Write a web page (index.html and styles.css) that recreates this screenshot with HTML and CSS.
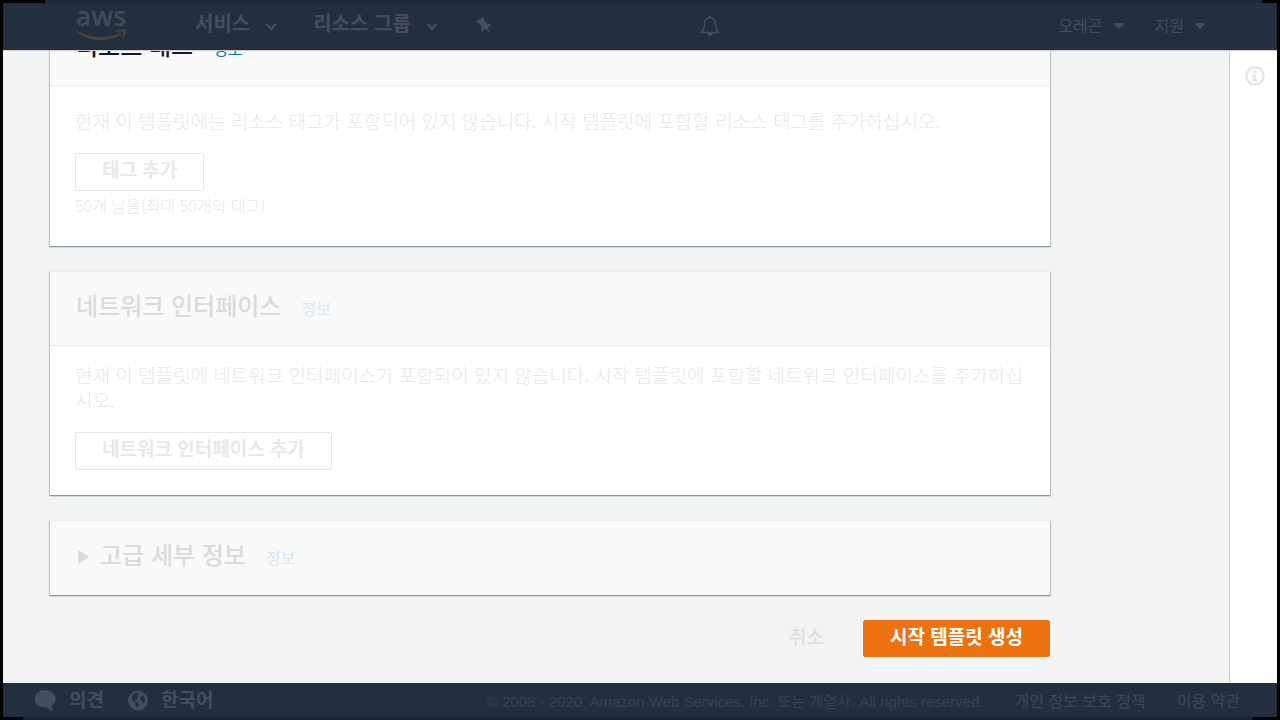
FILE: index.html
```html
<!DOCTYPE html>
<html lang="ko">

<head>
    <meta charset="UTF-8">
    <meta name="viewport" content="width=device-width, initial-scale=1.0">
    <title>시작 템플릿 생성</title>
    <link rel="stylesheet" href="styles.css">
</head>

<body>
    <div class="edge edge-top"></div>

    <div class="app">
        <!-- Top navigation -->
        <header class="navbar">
            <a class="logo" href="#">
                <span class="logo-text">aws</span>
                <svg class="logo-smile" viewBox="0 0 52 12" width="52" height="12">
                    <path d="M1 1.500C15 9.500 31 10 44.500 4.300C46 3.700 47 5 45.500 6C33 13.500 13 13 0.500 2.200C0 1.600 .4 1.200 1 1.500Z"/>
                    <path d="M40.500 1.800C43.500-.2 49-.5 50.600.5C51.800 2 50.300 7.500 47.300 9.900C46.800 10.300 46.500 10 46.700 9.400C47.600 7.200 48.700 4 48 3.100C47.200 2.200 43.500 2.500 41 2.700C40.300 2.700 40 2.200 40.500 1.800Z"/>
                </svg>
            </a>
            <button class="nav-main nav-services">서비스
                <svg width="12" height="7" viewBox="0 0 12 7"><path d="M0 0h3l3 3 3-3h3L6 7z"/></svg>
            </button>
            <button class="nav-main nav-groups">리소스 그룹
                <svg width="12" height="7" viewBox="0 0 12 7"><path d="M0 0h3l3 3 3-3h3L6 7z"/></svg>
            </button>
            <button class="nav-icon" aria-label="pin">
                <svg width="16" height="18" viewBox="0 0 16 18"><path d="M0 4.500L7 0l1.300 1-.5 1.500 3 4.300c1.700-.3 3.200.1 4.200 1.400l-3 2.200L14.500 17l-5.200-5.300L5.500 14.800c-.8-1.700-.6-3.300.4-4.700L2.800 5.800 1 6z"/></svg>
            </button>
            <button class="nav-icon nav-bell" aria-label="bell">
                <svg width="20" height="22" viewBox="0 0 20 22">
                    <path class="line" d="M1 17.500C4 15.500 4.500 12 4.500 9C4.500 5 6.500 2.700 10 2.700S15.500 5 15.500 9C15.500 12 16 15.500 19 17.500Z"/>
                    <path d="M9 .5h2v2H9zM7 18h6c0 4-6 4-6 0z"/>
                </svg>
            </button>
            <button class="nav-sub nav-region">오레곤
                <svg width="10" height="6" viewBox="0 0 10 6"><path d="M1 0h8l1 1-5 5-5-5z"/></svg>
            </button>
            <button class="nav-sub">지원
                <svg width="10" height="6" viewBox="0 0 10 6"><path d="M1 0h8l1 1-5 5-5-5z"/></svg>
            </button>
        </header>

        <div class="page">
            <main class="content">
                <section class="card">
                    <div class="card-header">
                        <h2 class="active">리소스 태그</h2>
                        <a class="info active" href="#">정보</a>
                    </div>
                    <div class="card-body tags">
                        <p>현재 이 템플릿에는 리소스 태그가 포함되어 있지 않습니다. 시작 템플릿에 포함할 리소스 태그를 추가하십시오.</p>
                        <button class="btn">태그 추가</button>
                        <small>50개 남음(최대 50개의 태그)</small>
                    </div>
                </section>

                <section class="card">
                    <div class="card-header">
                        <h2>네트워크 인터페이스</h2>
                        <a class="info" href="#">정보</a>
                    </div>
                    <div class="card-body">
                        <p>현재 이 템플릿에 네트워크 인터페이스가 포함되어 있지 않습니다. 시작 템플릿에 포함할 네트워크 인터페이스를 추가하십<wbr>시오.</p>
                        <button class="btn">네트워크 인터페이스 추가</button>
                    </div>
                </section>

                <section class="card">
                    <div class="card-header collapsed">
                        <svg class="arrow" width="11" height="14" viewBox="0 0 11 14"><path d="M1 .5L10.500 6.300v1L1 13.500Q0 13.500 0 12.500V1.500Q0 .5 1 .5z"/></svg>
                        <h2>고급 세부 정보</h2>
                        <a class="info" href="#">정보</a>
                    </div>
                </section>

                <div class="actions">
                    <button class="btn-link">취소</button>
                    <button class="btn btn-primary">시작 템플릿 생성</button>
                </div>
            </main>

            <aside class="help">
                <button class="help-btn" aria-label="info">
                    <svg width="20" height="20" viewBox="0 0 20 20">
                        <circle cx="10" cy="10" r="8.700"/>
                        <path d="M8.500 4.500h3v3h-3zM7.300 8.500h4.200v5h1.300v2H7.300v-2h1.200v-3H7.300z"/>
                    </svg>
                </button>
            </aside>
        </div>

        <!-- Footer -->
        <footer class="footer">
            <button class="foot-main">
                <svg width="22" height="21" viewBox="0 0 22 21"><path d="M11 0c6 0 10.500 3.800 10.500 8.700 0 3-1.600 5.500-4 7.100.2 1.900 1.200 3.400 2.500 4.700-3.400-.1-5.700-1.200-7.500-3.200C5.500 17.900.5 14 .5 8.700.5 3.800 5 0 11 0z"/></svg>
                <span>의견</span>
            </button>
            <button class="foot-main">
                <svg width="20" height="21" viewBox="0 0 20 21"><path fill-rule="evenodd" d="M10 .5a10 10 0 1 0 0 20 10 10 0 0 0 0-20zM5 4.500L7 3.300l3-.5 1 1-2 1.700 1.500 1.800-2.500 2.200-1.500 1.500 2.500 1.500 2.500 2-1.500 2.500-1 1-1.500-2.500-.5-3-2.500-2.500-1-2.500zM13 3.800l2.500 2 1.500 3.500-.5 3-1.500 1.500-1-2.500-2-1.500.5-2.500 2-1.500z"/></svg>
                <span>한국어</span>
            </button>
            <span class="copyright">© 2008 - 2020, Amazon Web Services, Inc. 또는 계열사. All rights reserved.</span>
            <a href="#">개인 정보 보호 정책</a>
            <a href="#">이용 약관</a>
        </footer>
    </div>

    <div class="edge edge-bottom"></div>
</body>

</html>
```
FILE: styles.css
```css
* {
    box-sizing: border-box;
}

body {
    margin: 0;
    height: 100vh;
    display: flex;
    flex-direction: column;
    background-color: #000;
    font-family: "Noto Sans CJK KR", sans-serif;
    overflow: hidden;
}

button {
    font-family: inherit;
    background: none;
    border: 0;
    padding: 0;
    cursor: pointer;
}

a {
    text-decoration: none;
}

.edge {
    height: 3px;
    flex: none;
}

.edge-top {
    margin: 0 18px 0 45px;
    background-color: #1e2a34;
}

.edge-bottom {
    margin: 0 27px 0 23px;
    background-color: #1b2430;
}

.app {
    flex: 1;
    min-height: 0;
    margin: 0 3px;
    display: flex;
    flex-direction: column;
}

/* Top navigation */
.navbar {
    display: flex;
    align-items: center;
    height: 47px;
    flex: none;
    padding: 0 72px;
    background-color: #232f3e;
}

.navbar svg,
.footer svg {
    fill: #444f5b;
    flex: none;
}

.logo {
    display: flex;
    flex-direction: column;
    width: 52px;
    padding-bottom: 9px;
}

.logo-text {
    font-family: "Open Sans", sans-serif;
    font-size: 27px;
    font-weight: 600;
    line-height: 26px;
    text-align: center;
    color: #414c59;
}

.navbar .logo-smile {
    fill: #4b443e;
}

.nav-main,
.nav-sub {
    display: flex;
    align-items: center;
    color: #444f5b;
}

.nav-main {
    gap: 15px;
    font-size: 20px;
    font-weight: 700;
    line-height: 28px;
    padding-bottom: 8px;
}

.nav-main svg {
    margin-top: 10px;
}

.nav-services {
    margin-left: 68px;
}

.nav-groups {
    margin: 0 38px 0 36px;
}

.nav-icon {
    display: flex;
    padding-bottom: 2px;
}

.nav-bell {
    margin: 0 auto 0 208px;
}

.nav-bell .line {
    fill: none;
    stroke: #444f5b;
    stroke-width: 1.5;
}

.nav-sub {
    gap: 11px;
    font-size: 16px;
    line-height: 24px;
    padding-bottom: 3px;
}

.nav-sub svg {
    margin-top: 2px;
}

.nav-region {
    margin-right: 31px;
}

/* Page */
.page {
    flex: 1;
    min-height: 0;
    display: flex;
    background-color: #f2f3f3;
    border-top: 1px solid #ccc;
}

/* scrolled to the bottom, the first card runs under the navbar */
.content {
    flex: 1;
    display: flex;
    flex-direction: column;
    justify-content: flex-end;
    gap: 25px;
    padding: 0 179px 26px 47px;
    overflow: hidden;
}

.card {
    flex: none;
    background-color: #fff;
    border-top: 1px solid #eaeded;
    box-shadow: 0 1px 1px 0 #879596, 1px 1px 1px 0 #c6cccc, -1px 1px 1px 0 #c6cccc;
}

.card-header {
    display: flex;
    align-items: baseline;
    gap: 20px;
    height: 74px;
    padding: 15px 26px;
    background-color: #fafafa;
    border-bottom: 1px solid #eaeded;
}

.card-header.collapsed {
    border-bottom: 0;
}

h2 {
    margin: 0;
    font-size: 24px;
    font-weight: 500;
    line-height: 36px;
    color: #d8dadb;
}

h2.active {
    color: #16191f;
}

.info {
    font-size: 16px;
    line-height: 24px;
    color: #d3e6f2;
}

.info.active {
    color: #0073bb;
}

.arrow {
    fill: #d8dadb;
    margin: 0 -9px 0 2px;
}

.card-body {
    display: flex;
    flex-direction: column;
    align-items: flex-start;
    padding: 16px 18px 25px 25px;
}

.card-body.tags {
    padding-top: 22px;
}

p {
    margin: 0 0 20px;
    font-size: 19px;
    font-weight: 300;
    line-height: 25px;
    color: #e6e8e9;
}

small {
    font-size: 16px;
    font-weight: 300;
    line-height: 28px;
    padding-bottom: 2px;
    color: #e6e8e9;
}

.btn {
    height: 38px;
    padding: 0 26px 6px;
    font-size: 19px;
    font-weight: 700;
    line-height: 28px;
    color: #e6e8e9;
    background-color: #fff;
    border: 1px solid #e4e6e7;
    border-radius: 2px;
}

.actions {
    flex: none;
    display: flex;
    justify-content: flex-end;
    gap: 39px;
}

.btn-link {
    font-size: 19px;
    font-weight: 500;
    line-height: 28px;
    padding-bottom: 5px;
    color: #dcdedf;
}

.btn-primary {
    height: 37px;
    padding-bottom: 5px;
    color: #fff;
    background-color: #ec7211;
    border-color: #ec7211;
}

.help {
    width: 48px;
    flex: none;
    background-color: #fff;
    border-left: 1px solid #c6cacb;
    text-align: center;
    padding: 15px 0 0 2px;
}

.help-btn circle {
    fill: none;
    stroke: #e4e6e7;
    stroke-width: 2.5;
}

.help-btn path {
    fill: #e4e6e7;
}

/* Footer */
.footer {
    display: flex;
    align-items: center;
    height: 34px;
    flex: none;
    padding: 0 37px 0 31px;
    background-color: #232f3e;
    color: #384450;
}

.foot-main {
    display: flex;
    align-items: center;
    gap: 13px;
    margin-right: 24px;
    font-size: 19px;
    font-weight: 700;
    line-height: 28px;
    color: #444f5b;
}

.foot-main span {
    padding-bottom: 3px;
}

.copyright {
    margin-left: auto;
    font-family: "Liberation Sans", "Noto Sans CJK KR", sans-serif;
    font-size: 15px;
}

.footer a {
    margin-left: 31px;
    font-size: 16px;
    line-height: 24px;
    color: #404b57;
}
```
